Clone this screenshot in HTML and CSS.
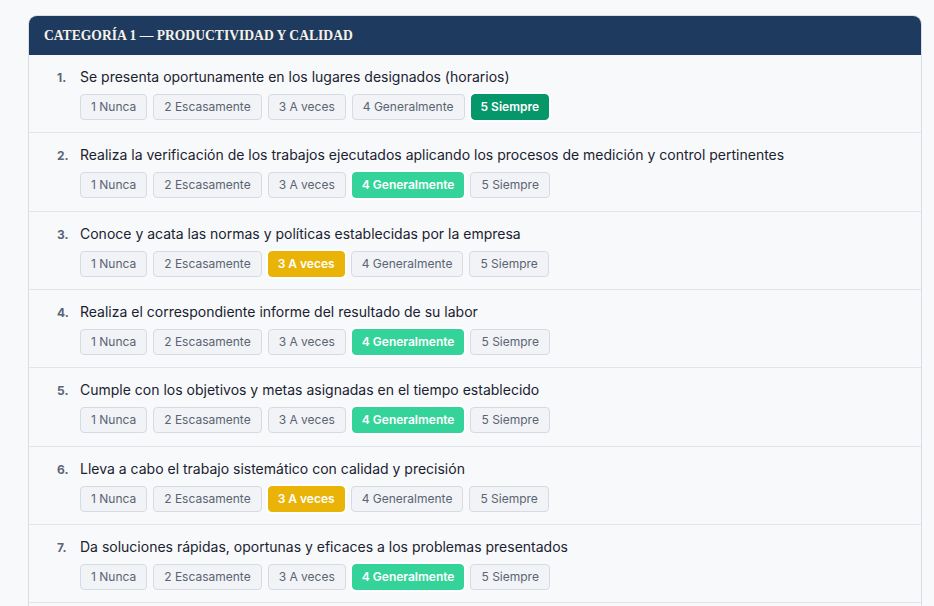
FILE: index.html
```html
<!DOCTYPE html>
<html lang="es">
<head>
<meta charset="utf-8">
<title>Evaluación</title>
<link rel="stylesheet" href="styles.css">
</head>
<body>
<section class="card">
  <header class="card-head">Categoría 1 — Productividad y calidad</header>
  <div class="row">
    <span class="num">1.</span>
    <div class="body">
      <p class="q">Se presenta oportunamente en los lugares designados (horarios)</p>
      <div class="opts">
        <span class="opt">1 Nunca</span><span class="opt">2 Escasamente</span><span class="opt">3 A veces</span><span class="opt">4 Generalmente</span><span class="opt sel5">5 Siempre</span>
      </div>
    </div>
  </div>
  <div class="row">
    <span class="num">2.</span>
    <div class="body">
      <p class="q">Realiza la verificación de los trabajos ejecutados aplicando los procesos de medición y control pertinentes</p>
      <div class="opts">
        <span class="opt">1 Nunca</span><span class="opt">2 Escasamente</span><span class="opt">3 A veces</span><span class="opt sel4">4 Generalmente</span><span class="opt">5 Siempre</span>
      </div>
    </div>
  </div>
  <div class="row">
    <span class="num">3.</span>
    <div class="body">
      <p class="q">Conoce y acata las normas y políticas establecidas por la empresa</p>
      <div class="opts">
        <span class="opt">1 Nunca</span><span class="opt">2 Escasamente</span><span class="opt sel3">3 A veces</span><span class="opt">4 Generalmente</span><span class="opt">5 Siempre</span>
      </div>
    </div>
  </div>
  <div class="row">
    <span class="num">4.</span>
    <div class="body">
      <p class="q">Realiza el correspondiente informe del resultado de su labor</p>
      <div class="opts">
        <span class="opt">1 Nunca</span><span class="opt">2 Escasamente</span><span class="opt">3 A veces</span><span class="opt sel4">4 Generalmente</span><span class="opt">5 Siempre</span>
      </div>
    </div>
  </div>
  <div class="row">
    <span class="num">5.</span>
    <div class="body">
      <p class="q">Cumple con los objetivos y metas asignadas en el tiempo establecido</p>
      <div class="opts">
        <span class="opt">1 Nunca</span><span class="opt">2 Escasamente</span><span class="opt">3 A veces</span><span class="opt sel4">4 Generalmente</span><span class="opt">5 Siempre</span>
      </div>
    </div>
  </div>
  <div class="row">
    <span class="num">6.</span>
    <div class="body">
      <p class="q">Lleva a cabo el trabajo sistemático con calidad y precisión</p>
      <div class="opts">
        <span class="opt">1 Nunca</span><span class="opt">2 Escasamente</span><span class="opt sel3">3 A veces</span><span class="opt">4 Generalmente</span><span class="opt">5 Siempre</span>
      </div>
    </div>
  </div>
  <div class="row">
    <span class="num">7.</span>
    <div class="body">
      <p class="q">Da soluciones rápidas, oportunas y eficaces a los problemas presentados</p>
      <div class="opts">
        <span class="opt">1 Nunca</span><span class="opt">2 Escasamente</span><span class="opt">3 A veces</span><span class="opt sel4">4 Generalmente</span><span class="opt">5 Siempre</span>
      </div>
    </div>
  </div>
  <div class="row row-more"></div>
</section>
</body>
</html>
```
FILE: styles.css
```css
html, body {
  margin: 0;
  padding: 0;
  background: #f8f9fb;
}
body {
  padding: 15px 12px 0 28px;
  font-family: Inter, "Noto Sans", sans-serif;
}
.card {
  border: 1px solid #d9dde5;
  border-radius: 9px;
  overflow: hidden;
  background: #f8f9fb;
}
.card-head {
  background: #1e3a5f;
  color: #f7f2e6;
  font-family: "Liberation Serif", "DejaVu Serif", serif;
  font-weight: 700;
  font-size: 13.6px;
  text-transform: uppercase;
  height: 39px;
  line-height: 40px;
  padding-left: 15px;
}
.row {
  display: flex;
  padding: 12px 16px 12.33px 28px;
  border-top: 1px solid #e2e5ec;
}
.card-head + .row {
  border-top: none;
}
.row-more {
  height: 40px;
}
.num {
  width: 23px;
  flex: none;
  font-size: 12px;
  font-weight: 700;
  color: #5b6577;
  line-height: 20px;
  padding-top: 1px;
}
.body {
  display: flex;
  flex-direction: column;
  gap: 7px;
}
.q {
  margin: 0;
  font-size: 14px;
  line-height: 20px;
  color: #1a2230;
}
.opts {
  display: flex;
  gap: 6px;
}
.opt {
  height: 24px;
  line-height: 24px;
  padding: 0 10px;
  font-size: 12px;
  color: #5b6473;
  background: #f1f3f6;
  border: 1px solid #d6dbe3;
  border-radius: 4px;
}
.sel5, .sel4, .sel3 {
  color: #ffffff;
  font-weight: 600;
  box-shadow: 0 0 0 2px #ffffff;
}
.sel5 { background: #059669; border-color: #059669; padding: 0 9px; }
.sel4 { background: #34d399; border-color: #34d399; padding: 0 9px; }
.sel3 { background: #eab308; border-color: #eab308; padding: 0 9px; }
```
